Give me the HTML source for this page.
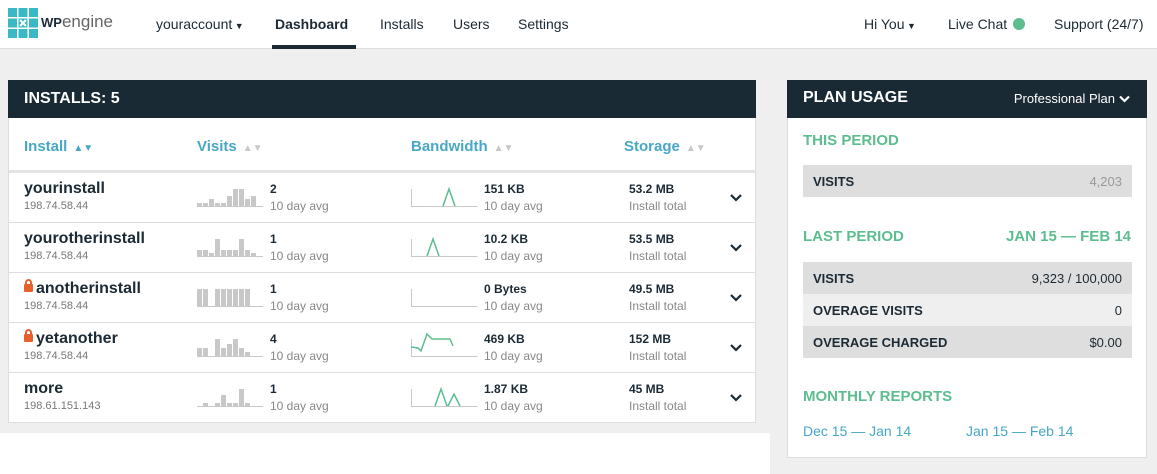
<!DOCTYPE html>
<html><head><style>
*{margin:0;padding:0;box-sizing:border-box}
body{width:1157px;height:474px;background:#efefef;font-family:"Liberation Sans",sans-serif;position:relative;overflow:hidden;color:#1b2a35}
.a{position:absolute;white-space:nowrap}
.nav{position:absolute;left:0;top:0;width:1157px;height:49px;background:#fff;border-bottom:1px solid #ddd}
.nav .a{font-size:14px;top:16px}
.hd{background:#1a2a35;color:#fff;font-weight:bold}
.th{color:#47a7c7;font-weight:bold;font-size:15px;top:138px}
.th i{color:#c8c8c8;font-style:normal;font-size:10px;margin-left:6px}
.nm{font-weight:bold;font-size:16px}
.ip{font-size:11px;color:#777}
.v{font-weight:bold;font-size:12px}
.s{font-size:12px;color:#888}
.sep{position:absolute;left:9px;width:746px;height:1px;background:#ddd}
.g{color:#5cbd8e;font-weight:bold;font-size:15px}
.row{position:absolute;left:803px;width:329px;height:32px;background:#dedede;font-size:13px;font-weight:bold;padding:9px 10px 0 10px}
.row span{float:right;font-weight:normal}
.lk{color:#47a7c7;font-size:14px}
.lock{display:inline-block;width:9px;height:8px;background:#e8612c;border-radius:1px;position:relative;margin-right:3px;top:-1px}
.lock:before{content:"";position:absolute;left:1px;top:-5px;width:3px;height:5px;border:2px solid #e8612c;border-bottom:none;border-radius:4px 4px 0 0}
</style></head><body>
<div class="nav">
<svg class="a" style="left:8px;top:8px" width="30" height="30" viewBox="0 0 30 30"><g fill="#3ab8c6"><rect x="0" y="0" width="9" height="9"/><rect x="10.5" y="0" width="9" height="9"/><rect x="21" y="0" width="9" height="9"/><rect x="0" y="10.5" width="9" height="9"/><rect x="21" y="10.5" width="9" height="9"/><rect x="0" y="21" width="9" height="9"/><rect x="10.5" y="21" width="9" height="9"/><rect x="21" y="21" width="9" height="9"/><path d="M10.5 10.5h9v9h-9z"/></g><path d="M12 12l6 6M18 12l-6 6" stroke="#fff" stroke-width="2"/></svg>
<div class="a" style="left:41px;top:12px!important;font-size:17px"><b style="font-size:13px">WP</b><span style="color:#666">engine</span></div>
<div class="a" style="left:156px">youraccount<span style="font-size:9px"> ▼</span></div>
<div class="a" style="left:275px;font-weight:bold">Dashboard</div>
<div style="position:absolute;left:272px;top:45px;width:84px;height:4px;background:#1a2a35"></div>
<div class="a" style="left:380px">Installs</div>
<div class="a" style="left:453px">Users</div>
<div class="a" style="left:518px">Settings</div>
<div class="a" style="left:864px">Hi You<span style="font-size:9px"> ▼</span></div>
<div class="a" style="left:948px">Live Chat <span style="display:inline-block;width:12px;height:12px;border-radius:6px;background:#5cbd8e;vertical-align:-1px;margin-left:2px"></span></div>
<div class="a" style="left:1054px">Support (24/7)</div>
</div>

<div style="position:absolute;left:0;top:433px;width:770px;height:41px;background:#fff"></div>
<div style="position:absolute;left:8px;top:80px;width:748px;height:343px;background:#fff;border:1px solid #ddd"></div>
<div class="a hd" style="left:8px;top:80px;width:748px;height:38px;font-size:16px;padding:10px 16px">INSTALLS: 5</div>
<div class="a th" style="left:24px">Install<i style="color:#47a7c7">▲▼</i></div>
<div class="a th" style="left:197px">Visits<i>▲▼</i></div>
<div class="a th" style="left:411px">Bandwidth<i>▲▼</i></div>
<div class="a th" style="left:624px">Storage<i>▲▼</i></div>
<div class="sep" style="top:170px;height:3px;background:#e4e4e4"></div>
<div class="sep" style="top:222px"></div><div class="sep" style="top:272px"></div><div class="sep" style="top:322px"></div><div class="sep" style="top:372px"></div>

<svg class="a" style="left:0;top:0" width="760" height="430">
<g fill="#c8c8c8" stroke="none">
<path d="M197 206h66v1h-66z"/>
<rect x="197" y="203" width="5" height="3"/><rect x="203" y="203" width="5" height="3"/><rect x="209" y="199" width="5" height="7"/><rect x="215" y="203" width="5" height="3"/><rect x="221" y="203" width="5" height="3"/><rect x="227" y="196" width="5" height="10"/><rect x="233" y="189" width="5" height="17"/><rect x="239" y="189" width="5" height="17"/><rect x="245" y="199" width="5" height="7"/><rect x="251" y="196" width="5" height="10"/>
<path d="M197 256h66v1h-66z"/>
<rect x="197" y="250" width="5" height="6"/><rect x="203" y="250" width="5" height="6"/><rect x="209" y="253" width="5" height="3"/><rect x="215" y="239" width="5" height="17"/><rect x="221" y="250" width="5" height="6"/><rect x="227" y="250" width="5" height="6"/><rect x="233" y="250" width="5" height="6"/><rect x="239" y="239" width="5" height="17"/><rect x="245" y="250" width="5" height="6"/><rect x="251" y="253" width="5" height="3"/>
<path d="M197 306h66v1h-66z"/>
<rect x="197" y="289" width="5" height="17"/><rect x="203" y="289" width="5" height="17"/><rect x="215" y="289" width="5" height="17"/><rect x="221" y="289" width="5" height="17"/><rect x="227" y="289" width="5" height="17"/><rect x="233" y="289" width="5" height="17"/><rect x="239" y="289" width="5" height="17"/><rect x="245" y="289" width="5" height="17"/>
<path d="M197 356h66v1h-66z"/>
<rect x="197" y="348" width="5" height="8"/><rect x="203" y="348" width="5" height="8"/><rect x="215" y="339" width="5" height="17"/><rect x="221" y="348" width="5" height="8"/><rect x="227" y="344" width="5" height="12"/><rect x="233" y="339" width="5" height="17"/><rect x="239" y="348" width="5" height="8"/><rect x="245" y="352" width="5" height="4"/>
<path d="M197 406h66v1h-66z"/>
<rect x="203" y="403" width="5" height="3"/><rect x="215" y="403" width="5" height="3"/><rect x="221" y="395" width="5" height="11"/><rect x="227" y="403" width="5" height="3"/><rect x="233" y="403" width="5" height="3"/><rect x="239" y="389" width="5" height="17"/><rect x="245" y="403" width="5" height="3"/>
</g>
<g stroke="#c8c8c8" stroke-width="1" fill="none">
<path d="M411.5 189v17.5h66"/><path d="M411.5 239v17.5h66"/><path d="M411.5 289v17.5h66"/><path d="M411.5 339v17.5h66"/><path d="M411.5 389v17.5h66"/>
</g>
<g stroke="#5cbd8e" stroke-width="1.5" fill="none">
<path d="M443 206l6-17 6 17"/><path d="M427 256l6-17 6 17"/>
<path d="M411 347l7 1 3 3 6-17 5 5h18l3 7"/>
<path d="M435 406l6-17 6 17M448 406l6-12 6 12"/>
</g>
<g stroke="#1a2a35" stroke-width="2.2" fill="none">
<path d="M731 195l5 5 5-5"/><path d="M731 245l5 5 5-5"/><path d="M731 295l5 5 5-5"/><path d="M731 345l5 5 5-5"/><path d="M731 395l5 5 5-5"/>
</g>
</svg>

<div class="a nm" style="left:24px;top:180px">yourinstall</div><div class="a ip" style="left:24px;top:200px">198.74.58.44</div>
<div class="a nm" style="left:24px;top:230px">yourotherinstall</div><div class="a ip" style="left:24px;top:250px">198.74.58.44</div>
<div class="a nm" style="left:24px;top:280px"><span class="lock"></span>anotherinstall</div><div class="a ip" style="left:24px;top:300px">198.74.58.44</div>
<div class="a nm" style="left:24px;top:330px"><span class="lock"></span>yetanother</div><div class="a ip" style="left:24px;top:350px">198.74.58.44</div>
<div class="a nm" style="left:24px;top:380px">more</div><div class="a ip" style="left:24px;top:400px">198.61.151.143</div>

<div class="a v" style="left:270px;top:182px">2</div><div class="a s" style="left:270px;top:199px">10 day avg</div>
<div class="a v" style="left:270px;top:232px">1</div><div class="a s" style="left:270px;top:249px">10 day avg</div>
<div class="a v" style="left:270px;top:282px">1</div><div class="a s" style="left:270px;top:299px">10 day avg</div>
<div class="a v" style="left:270px;top:332px">4</div><div class="a s" style="left:270px;top:349px">10 day avg</div>
<div class="a v" style="left:270px;top:382px">1</div><div class="a s" style="left:270px;top:399px">10 day avg</div>

<div class="a v" style="left:484px;top:182px">151 KB</div><div class="a s" style="left:484px;top:199px">10 day avg</div>
<div class="a v" style="left:484px;top:232px">10.2 KB</div><div class="a s" style="left:484px;top:249px">10 day avg</div>
<div class="a v" style="left:484px;top:282px">0 Bytes</div><div class="a s" style="left:484px;top:299px">10 day avg</div>
<div class="a v" style="left:484px;top:332px">469 KB</div><div class="a s" style="left:484px;top:349px">10 day avg</div>
<div class="a v" style="left:484px;top:382px">1.87 KB</div><div class="a s" style="left:484px;top:399px">10 day avg</div>

<div class="a v" style="left:629px;top:182px">53.2 MB</div><div class="a s" style="left:629px;top:199px">Install total</div>
<div class="a v" style="left:629px;top:232px">53.5 MB</div><div class="a s" style="left:629px;top:249px">Install total</div>
<div class="a v" style="left:629px;top:282px">49.5 MB</div><div class="a s" style="left:629px;top:299px">Install total</div>
<div class="a v" style="left:629px;top:332px">152 MB</div><div class="a s" style="left:629px;top:349px">Install total</div>
<div class="a v" style="left:629px;top:382px">45 MB</div><div class="a s" style="left:629px;top:399px">Install total</div>

<div style="position:absolute;left:787px;top:80px;width:360px;height:378px;background:#fff;border:1px solid #ddd"></div>
<div class="a hd" style="left:787px;top:80px;width:360px;height:38px;font-size:16px;padding:9px 16px">PLAN USAGE<span style="position:absolute;right:32px;top:11px;font-size:13px;font-weight:normal">Professional Plan</span>
<svg style="position:absolute;right:17px;top:15px" width="11" height="8"><path d="M1 1.5l4.5 4.5 4.5-4.5" stroke="#fff" stroke-width="2.2" fill="none"/></svg></div>
<div class="a g" style="left:803px;top:132px">THIS PERIOD</div>
<div class="row" style="top:165px">VISITS<span style="color:#999">4,203</span></div>
<div class="a g" style="left:803px;top:228px">LAST PERIOD</div>
<div class="a g" style="right:26px;top:228px">JAN 15 — FEB 14</div>
<div class="row" style="top:262px">VISITS<span>9,323 / 100,000</span></div>
<div class="row" style="top:294px;background:#efefef">OVERAGE VISITS<span>0</span></div>
<div class="row" style="top:326px">OVERAGE CHARGED<span>$0.00</span></div>
<div class="a g" style="left:803px;top:388px">MONTHLY REPORTS</div>
<div class="a lk" style="left:803px;top:423px">Dec 15 — Jan 14</div>
<div class="a lk" style="left:966px;top:423px">Jan 15 — Feb 14</div>
</body></html>
